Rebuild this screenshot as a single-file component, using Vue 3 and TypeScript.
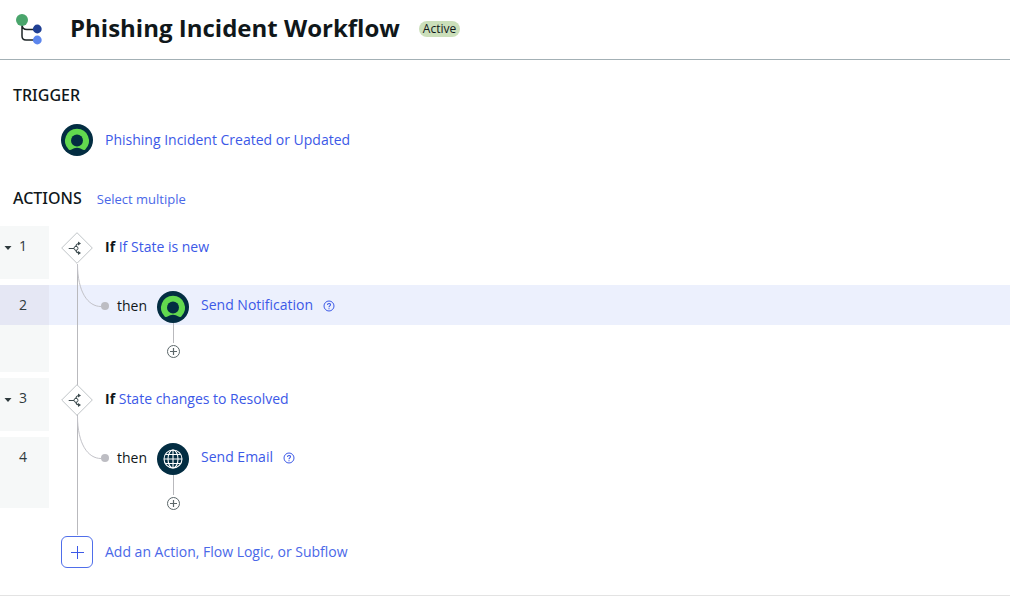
<script setup lang="ts">
interface Step {
  id: number
  label: string
  icon: 'agent' | 'globe'
  selected: boolean
}

interface Branch {
  id: number
  condition: string
  step: Step
}

const branches: Branch[] = [
  {
    id: 1,
    condition: 'If State is new',
    step: { id: 2, label: 'Send Notification', icon: 'agent', selected: true },
  },
  {
    id: 3,
    condition: 'State changes to Resolved',
    step: { id: 4, label: 'Send Email', icon: 'globe', selected: false },
  },
]
</script>

<template>
  <div class="page">
    <svg class="symbols" aria-hidden="true">
      <symbol id="agent" viewBox="0 0 32 32">
        <circle cx="16" cy="16" r="16" fill="#032d42" />
        <path
          d="M16 4.8a12 12 0 0 0-8.3 20.6c.8.8 2 .9 2.900.2a8.400 8.400 0 0 1 10.800 0c.9.7 2.100.6 2.900-.2A12 12 0 0 0 16 4.800z"
          fill="#62d84e"
        />
        <circle cx="16" cy="16.600" r="6" fill="#032d42" />
      </symbol>
      <symbol id="globe" viewBox="0 0 32 32">
        <circle cx="16" cy="16" r="16" fill="#032d42" />
        <g fill="none" stroke="#fff" stroke-width="1.100">
          <circle cx="16" cy="16" r="9" />
          <ellipse cx="16" cy="16" rx="5" ry="9" />
          <path d="M16 7v18M7 16h18M8.500 11.500h15M8.500 20.500h15" />
        </g>
      </symbol>
    </svg>

    <header class="header">
      <svg class="logo" width="30" height="34" viewBox="0 0 30 34" aria-hidden="true">
        <path d="M8 8v17q0 4 4 4h11M8 13.500q0 5 5 5h10" fill="none" stroke="#1d2426" stroke-width="1.500" />
        <circle cx="8" cy="9" r="6" fill="#4aa56c" />
        <circle cx="23.300" cy="18" r="4.400" fill="#1f3f93" />
        <circle cx="23.300" cy="29" r="4.400" fill="#5c86ed" />
      </svg>
      <h1 class="title">Phishing Incident Workflow</h1>
      <span class="status">Active</span>
    </header>

    <main class="content">
      <h2 class="heading">TRIGGER</h2>
      <div class="trigger">
        <svg class="badge" aria-hidden="true"><use href="#agent" /></svg>
        <a class="link" href="#">Phishing Incident Created or Updated</a>
      </div>

      <div class="actions-head">
        <h2 class="heading">ACTIONS</h2>
        <a class="link small" href="#">Select multiple</a>
      </div>

      <div class="flow">
        <section v-for="branch in branches" :key="branch.id" class="branch">
          <div class="row condition">
            <div class="gutter">
              <button class="toggle" type="button" :aria-label="`Collapse step ${branch.id}`">
                <svg width="8" height="4" viewBox="0 0 8 4"><path d="M.5 0h7L4 4z" fill="#2e3a3d" /></svg>
              </button>
              <span class="number">{{ branch.id }}</span>
            </div>
            <div class="line">
              <svg class="diamond" width="32" height="32" viewBox="0 0 32 32" aria-hidden="true">
                <path d="M16 .7 31.300 16 16 31.300.7 16z" fill="#fff" stroke="#bfc4c7" />
                <g fill="none" stroke="#3c4a4e">
                  <path d="M7.700 16.500h5.300M15 14.500q0-3 3.500-3M15 18q0 3 3.500 3" stroke-width="1.200" />
                  <circle cx="15" cy="16.300" r="2" />
                </g>
                <path d="M17 9.500 20 11.500 17 13.500zM17 19 20 21 17 23z" fill="#3c4a4e" />
              </svg>
              <p class="text"><strong>If</strong> <a class="link" href="#">{{ branch.condition }}</a></p>
            </div>
          </div>

          <div class="row step" :class="{ selected: branch.step.selected }">
            <div class="gutter">
              <span class="number">{{ branch.step.id }}</span>
            </div>
            <div class="body">
              <div class="line nested">
                <span class="then">then</span>
                <svg class="badge" aria-hidden="true"><use :href="`#${branch.step.icon}`" /></svg>
                <a class="link" href="#">{{ branch.step.label }}</a>
                <button class="help" type="button" :aria-label="`Help for ${branch.step.label}`">
                  <svg width="12" height="12" viewBox="0 0 12 12" fill="none" stroke="#3c59e7">
                    <circle cx="6" cy="6" r="5" />
                    <path d="M4.500 5c0-2 3-2 3-.2C7.500 6 6 5.800 6 7.200M6 8.200v1.100" stroke-width="1.100" />
                  </svg>
                </button>
              </div>
              <div class="tail">
                <span class="stem"></span>
                <button class="insert" type="button" :aria-label="`Add after step ${branch.step.id}`">
                  <svg width="13" height="13" viewBox="0 0 13 13" fill="none" stroke="#5b6669">
                    <circle cx="6.500" cy="6.500" r="6" />
                    <path d="M6.500 3v7M3 6.500h7" stroke-width="1.200" />
                  </svg>
                </button>
              </div>
            </div>
          </div>

          <svg class="curve" width="34" height="48" viewBox="0 0 34 48" aria-hidden="true">
            <path d="M.5 0C.5 28 11 42.500 24 42.500" fill="none" stroke="#c2c2c8" />
            <circle cx="28" cy="42" r="4" fill="#bdbdc3" />
          </svg>
        </section>

        <button class="add" type="button">
          <span class="add-box">
            <svg width="14" height="14" viewBox="0 0 14 14"><path d="M7.500 1v13M1 7.500h13" stroke="#3c59e7" /></svg>
          </span>
          <span>Add an Action, Flow Logic, or Subflow</span>
        </button>
      </div>
    </main>
  </div>
</template>

<style>
body {
  margin: 0;
  background: #fff;
}
</style>

<style scoped>
.page {
  font-family: "Open Sans", "Noto Sans", sans-serif;
  font-size: 14px;
  line-height: 20px;
  color: #10171a;
}

.symbols {
  display: block;
  width: 0;
  height: 0;
}

svg {
  display: block;
  flex: none;
}

button {
  padding: 0;
  border: 0;
  background: none;
  font: inherit;
  cursor: pointer;
}

.header {
  display: flex;
  align-items: center;
  height: 59px;
  padding: 0 14px;
  border-bottom: 1px solid #a3b0b5;
}

.logo {
  margin-right: 26px;
  margin-bottom: 4px;
}

.title {
  margin: 0 19px 4px 0;
  font-size: 24px;
  line-height: 32px;
  font-weight: 700;
}

.status {
  margin-bottom: 2px;
  padding: 0 4px;
  border-radius: 8px;
  background: #cbdfba;
  font-size: 12px;
  line-height: 16px;
}

.content {
  padding: 24px 0 27px;
  border-bottom: 1px solid #e3e3e3;
}

.heading {
  margin: 0;
  padding-left: 13px;
  font-family: "Noto Sans", "Open Sans", sans-serif;
  font-size: 16px;
  line-height: 22px;
  font-weight: 500;
}

.trigger {
  display: flex;
  align-items: center;
  gap: 12px;
  margin: 18px 0 31px;
  padding-left: 61px;
}

.badge {
  width: 32px;
  height: 32px;
}

.link {
  color: #3c59e7;
  text-decoration: none;
}

.small {
  padding-top: 2px;
  font-size: 13px;
  color: #4a68e8;
}

.actions-head {
  display: flex;
  align-items: center;
  gap: 15px;
  margin-bottom: 17px;
}

.flow {
  position: relative;
}

.flow::before {
  content: "";
  position: absolute;
  z-index: 1;
  top: 38px;
  bottom: 33px;
  left: 77px;
  width: 1px;
  background: #b9b9bd;
}

.branch {
  position: relative;
  display: flex;
  flex-direction: column;
  gap: 6px;
  margin-bottom: 6px;
}

.row {
  display: flex;
}

.gutter {
  display: flex;
  flex: none;
  align-items: flex-start;
  justify-content: space-between;
  box-sizing: border-box;
  width: 49px;
  padding: 10px 22px 0 4px;
  background: #f6f8f8;
  color: #2e3a3d;
}

.number {
  margin-left: auto;
}

.toggle {
  padding: 10px 0 6px;
}

.condition {
  min-height: 53px;
}

.line {
  display: flex;
  align-items: center;
  height: 32px;
  padding: 6px 12px 2px;
}

.diamond {
  position: relative;
  z-index: 2;
  margin-right: 12px;
}

.text {
  margin: 0 0 2px;
}

.step {
  min-height: 71px;
}

.step.selected {
  min-height: 87px;
}

.body {
  flex: 1;
}

.nested {
  gap: 10px;
  padding-left: 68px;
}

.nested .link {
  margin: 0 0 4px 2px;
}

.then {
  margin-bottom: 2px;
}

.help {
  margin-bottom: 3px;
}

.selected .nested {
  background: #ecf0fd;
}

.selected .gutter {
  background: linear-gradient(#e5e7f4 40px, #f6f8f8 40px);
}

.tail {
  display: flex;
  flex-direction: column;
  align-items: center;
  gap: 2px;
  width: 13px;
  margin: -2px 0;
  padding-left: 118px;
}

.stem {
  width: 1px;
  height: 20px;
  background: #b9b9bd;
}

.curve {
  position: absolute;
  z-index: 1;
  top: 38px;
  left: 77px;
}

.add {
  display: flex;
  align-items: center;
  gap: 12px;
  margin-top: 28px;
  padding-left: 61px;
  color: #4a68e8;
}

.add-box {
  display: flex;
  align-items: center;
  justify-content: center;
  box-sizing: border-box;
  width: 32px;
  height: 32px;
  border: 1px solid #4f6eea;
  border-radius: 6px;
}
</style>
